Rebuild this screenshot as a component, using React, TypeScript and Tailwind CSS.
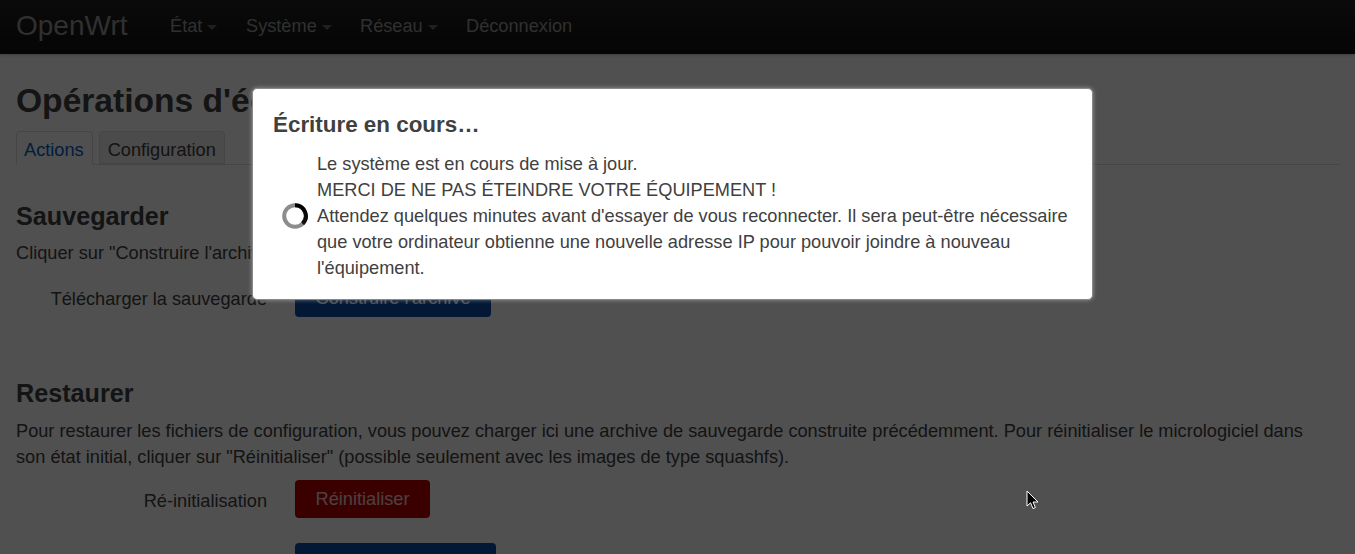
import { useId } from "react";

const navItems = [
  { label: "État", caret: true, width: "w-[76px]" },
  { label: "Système", caret: true, width: "w-[114px]" },
  { label: "Réseau", caret: true, width: "w-[106px]" },
  { label: "Déconnexion", caret: false, width: "w-[110px]" },
];

function Caret() {
  return <span className="ml-[5px] mt-[2px] inline-block border-x-[5px] border-t-[5px] border-x-transparent border-t-[#999] opacity-60" />;
}

function Spinner() {
  const id = useId();
  return (
    <svg width="26" height="26" viewBox="0 0 26 26" className="shrink-0">
      <defs>
        <linearGradient id={id} x1="0" y1="0" x2="0" y2="1">
          <stop offset="0" stopColor="#000" />
          <stop offset="1" stopColor="#111" />
        </linearGradient>
      </defs>
      <circle cx="13" cy="13" r="10.8" fill="none" stroke="#8c8c8c" strokeWidth="4" />
      <path d="M13 2.2A10.8 10.8 0 0 1 20.6 20.7" fill="none" stroke={`url(#${id})`} strokeWidth="4" />
    </svg>
  );
}

function Field({ label, children, labelPad }: { label: string; children: React.ReactNode; labelPad: string }) {
  return (
    <div className="flex items-start">
      <div className={`w-[251px] text-right text-[#404040] ${labelPad}`}>{label}</div>
      <div className="ml-[28px]">{children}</div>
    </div>
  );
}

export default function App() {
  return (
    <div className="relative h-[554px] w-[1355px] overflow-hidden bg-white font-['Liberation_Sans',sans-serif] text-[18.2px] leading-[26px] text-[#404040]">
      {/* Page behind the modal */}
      <header className="flex h-[54px] items-center bg-gradient-to-b from-[#222] to-[#111] pb-[2px] pl-[16px] shadow-[0_1px_3px_rgba(0,0,0,0.25)]">
        <span className="w-[154px] text-[28px] text-[#999]">OpenWrt</span>
        <nav className="flex text-[#999]">
          {navItems.map((item) => (
            <span key={item.label} className={`flex items-center ${item.width}`}>
              {item.label}
              {item.caret && <Caret />}
            </span>
          ))}
        </nav>
      </header>

      <main className="px-[16px]">
        <h2 className="mt-[27px] text-[33.6px] font-bold leading-[40px]">Opérations d'écriture</h2>

        <div className="mt-[10px] flex gap-[6px] border-b border-[#ddd]">
          <span className="-mb-px h-[34px] rounded-t-[4px] border border-[#ddd] border-b-white bg-white pl-[7px] pr-[8px] pt-[5px] text-[#0060c0]">Actions</span>
          <span className="h-[33px] rounded-t-[4px] border border-[#ddd] bg-[#eee] px-[8px] pt-[5px]">Configuration</span>
        </div>

        <h3 className="mt-[37px] text-[25.2px] font-bold leading-[28px]">Sauvegarder</h3>
        <p className="mt-[10px]">Cliquer sur "Construire l'archive" pour télécharger une archive tar des fichiers de configuration actuels.</p>
        <div className="mt-[13px]">
          <Field label="Télécharger la sauvegarde" labelPad="pt-[7px]">
            <span className="block h-[38px] rounded-[4px] bg-[#0a4fa8] px-[20.5px] pt-[6px] text-white">Construire l'archive</span>
          </Field>
        </div>

        <h3 className="mt-[62px] text-[25.2px] font-bold leading-[28px]">Restaurer</h3>
        <p className="mt-[11px] w-[1300px]">
          Pour restaurer les fichiers de configuration, vous pouvez charger ici une archive de sauvegarde construite précédemment. Pour réinitialiser le micrologiciel dans son état initial, cliquer sur "Réinitialiser" (possible seulement avec les images de type squashfs).
        </p>
        <div className="mt-[10px]">
          <Field label="Ré-initialisation" labelPad="pt-[8px]">
            <span className="block h-[38px] rounded-[4px] bg-[#b80000] px-[20.5px] pt-[6px] text-white/80">Réinitialiser</span>
          </Field>
        </div>
        <div className="mt-[25px]">
          <Field label="" labelPad="pt-[8px]">
            <span className="block h-[38px] w-[201px] rounded-[4px] bg-[#0a4fa8]" />
          </Field>
        </div>
      </main>

      {/* Modal overlay */}
      <div className="absolute inset-0 bg-black/[0.686]" />
      <div className="absolute left-[252px] top-[88px] h-[212px] w-[841px] rounded-[5px] border border-[#888] bg-white px-[20px] pt-[23px] shadow-[0_0_4px_rgba(255,255,255,0.4)]">
        <h4 className="text-[22.4px] font-bold leading-[26px]">Écriture en cours…</h4>
        <div className="mt-[13px] flex items-center gap-[9px] pl-[9px]">
          <Spinner />
          <p className="w-[755px]">
            Le système est en cours de mise à jour.
            <br />
            MERCI DE NE PAS ÉTEINDRE VOTRE ÉQUIPEMENT !
            <br />
            Attendez quelques minutes avant d'essayer de vous reconnecter. Il sera peut-être nécessaire que votre ordinateur obtienne une nouvelle adresse IP pour pouvoir joindre à nouveau l'équipement.
          </p>
        </div>
      </div>

      {/* Mouse pointer */}
      <svg width="14" height="21" viewBox="0 0 14 21" className="absolute left-[1026px] top-[490px]">
        <path d="M1 1V16L4.6 12.8L7 18.6L9.4 17.6L7 12H12Z" fill="#000" stroke="#fff" strokeWidth="1" />
      </svg>
    </div>
  );
}
